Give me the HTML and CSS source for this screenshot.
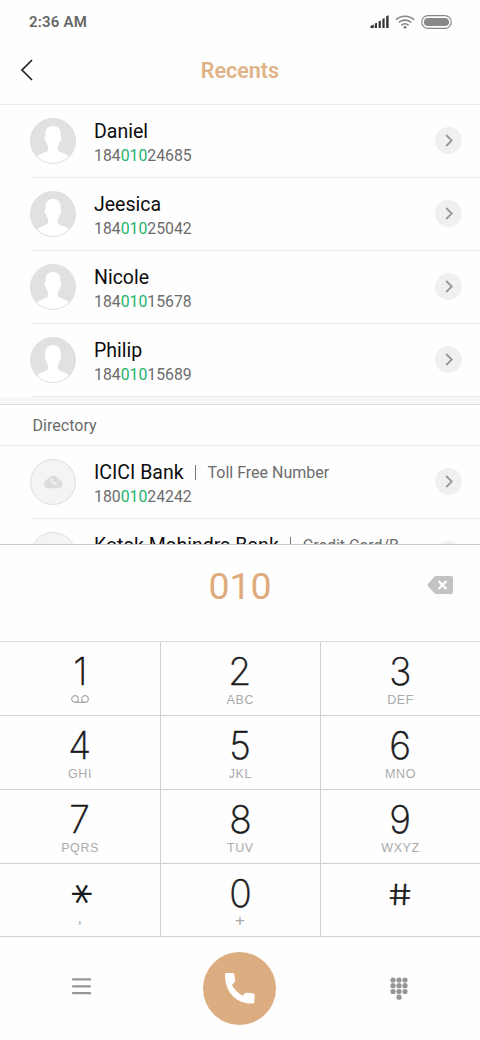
FILE: index.html
```html
<!DOCTYPE html>
<html lang="en">
<head>
<meta charset="utf-8">
<title>Recents</title>
<link rel="stylesheet" href="styles.css">
</head>
<body>
<svg width="0" height="0" class="defs">
  <defs>
    <symbol id="person" viewBox="0 0 46 46">
      <circle cx="23" cy="23" r="22.500" fill="#dfe1e3"/>
      <path d="M23 8c-5 0-7.600 3-7.600 7.500v3c-1.300.3-1 3.500.5 4.500.5 2.500 1.300 3.700 2.300 5v4.200c-2 2-8.200 3.300-11.500 6.300A22.300 22.300 0 0 0 23 45.300 22.300 22.300 0 0 0 39.300 38.500c-3.300-3-9.500-4.300-11.500-6.300V28c1-1.300 1.800-2.500 2.300-5 1.500-1 1.800-4.200.5-4.500v-3C30.600 11 28 8 23 8z" fill="#fff"/>
      <circle cx="23" cy="23" r="22.500" fill="none" stroke="#dcdee0"/>
    </symbol>
    <symbol id="cloud" viewBox="0 0 46 46">
      <circle cx="23" cy="23" r="22.500" fill="#f4f4f4" stroke="#dedede"/>
      <path d="M18.500 29.300a4.600 4.600 0 0 1-.7-9.100 6 6 0 0 1 10.800-.3 4.800 4.800 0 0 1-.1 9.400z" fill="#dcdcdc"/>
      <path d="M20.500 19.200l1.300-.2.700 1.800-.7.900 2.200 2 1-.6 1.700.9-.3 1.400c-3.500.6-6.500-2.500-5.900-6.200z" fill="#f4f4f4"/>
    </symbol>
    <symbol id="go" viewBox="0 0 27 27">
      <circle cx="13.500" cy="13.500" r="13.500" fill="#f0f0f0"/>
      <path d="M11.200 8l5.500 5.500-5.500 5.500" fill="none" stroke="#979797" stroke-width="1.800"/>
    </symbol>
  </defs>
</svg>
<div class="phone">
  <div class="status">
    <span class="time">2:36 AM</span>
    <svg class="signals" width="82" height="16" viewBox="0 0 82 16">
      <path d="M.5 14v-2l3.300-1.500V14zM4.800 14V9.600L7 8.700V14zM8.600 14V7.400l2.200-1V14zM12.400 14V5l2.200-1V14zM16.200 14V2.300l2.400-1V14z" fill="#333"/>
      <g fill="none" stroke="#858585" stroke-width="1.600">
        <path d="M26 5.600c5-4.500 13-4.500 18 0M28.700 8.500c3.500-3.200 9.100-3.200 12.600 0M31.400 11.300c2-1.900 5.200-1.900 7.200 0"/>
      </g>
      <circle cx="35" cy="13.300" r="1.400" fill="#777"/>
      <rect x="51.700" y="1.600" width="29.600" height="12.800" rx="6.400" fill="#fff" stroke="#858585" stroke-width="1.100"/>
      <rect x="54" y="4" width="25" height="8" rx="3.800" fill="#888"/>
    </svg>
  </div>
  <header class="header">
    <svg class="back" width="14" height="22" viewBox="0 0 14 22"><path d="M12 1L2 11l10 10" fill="none" stroke="#222" stroke-width="1.700"/></svg>
    <h1 class="title">Recents</h1>
  </header>
  <main class="list">
    <div class="row">
      <svg class="avatar"><use href="#person"/></svg>
      <div class="info"><div class="name">Daniel</div><div class="number">184<b>010</b>24685</div></div>
      <svg class="go"><use href="#go"/></svg>
    </div>
    <div class="row">
      <svg class="avatar"><use href="#person"/></svg>
      <div class="info"><div class="name">Jeesica</div><div class="number">184<b>010</b>25042</div></div>
      <svg class="go"><use href="#go"/></svg>
    </div>
    <div class="row">
      <svg class="avatar"><use href="#person"/></svg>
      <div class="info"><div class="name">Nicole</div><div class="number">184<b>010</b>15678</div></div>
      <svg class="go"><use href="#go"/></svg>
    </div>
    <div class="row">
      <svg class="avatar"><use href="#person"/></svg>
      <div class="info"><div class="name">Philip</div><div class="number">184<b>010</b>15689</div></div>
      <svg class="go"><use href="#go"/></svg>
    </div>
    <div class="gap"></div>
    <h2 class="section">Directory</h2>
    <div class="row">
      <svg class="avatar"><use href="#cloud"/></svg>
      <div class="info"><div class="name bank">ICICI Bank<i class="bar"></i><span class="kind">Toll Free Number</span></div><div class="number">180<b>010</b>24242</div></div>
      <svg class="go"><use href="#go"/></svg>
    </div>
    <div class="row partial">
      <svg class="avatar"><use href="#cloud"/></svg>
      <div class="info"><div class="name bank">Kotak Mahindra Bank<i class="bar"></i><span class="kind">Credit Card/B</span></div></div>
      <svg class="go"><use href="#go"/></svg>
    </div>
  </main>
  <section class="display">
    <span class="typed">010</span>
    <svg class="erase" width="26" height="18" viewBox="0 0 26 18">
      <path d="M9.200 0H24q2 0 2 2v14q0 2-2 2H9.200q-1.200 0-2-.9L1 10.300Q0 9 1 7.700L7.200.9Q8 0 9.200 0z" fill="#c2c2c2"/>
      <path d="M11.500 5l8 8m0-8l-8 8" stroke="#fff" stroke-width="2.200"/>
    </svg>
  </section>
  <section class="keypad">
    <div class="key"><span class="digit">1</span><svg class="voicemail" width="18" height="9" viewBox="0 0 18 9"><g fill="none" stroke="#aaa" stroke-width="1.200"><circle cx="4" cy="4" r="3.300"/><circle cx="14" cy="4" r="3.300"/><path d="M4 7.400h10"/></g></svg></div>
    <div class="key"><span class="digit">2</span><span class="letters">ABC</span></div>
    <div class="key"><span class="digit">3</span><span class="letters">DEF</span></div>
    <div class="key"><span class="digit">4</span><span class="letters">GHI</span></div>
    <div class="key"><span class="digit">5</span><span class="letters">JKL</span></div>
    <div class="key"><span class="digit">6</span><span class="letters">MNO</span></div>
    <div class="key"><span class="digit">7</span><span class="letters">PQRS</span></div>
    <div class="key"><span class="digit">8</span><span class="letters">TUV</span></div>
    <div class="key"><span class="digit">9</span><span class="letters">WXYZ</span></div>
    <div class="key"><span class="digit star">*</span><span class="letters comma">,</span></div>
    <div class="key"><span class="digit">0</span><span class="letters plus">+</span></div>
    <div class="key"><span class="digit hash">#</span></div>
  </section>
  <footer class="footer">
    <svg class="menu" width="19" height="17" viewBox="0 0 19 17"><path d="M1 1.400h17M1 8.300h17M1 15.100h17" stroke="#969696" stroke-width="2.200" stroke-linecap="round"/></svg>
    <div class="call">
      <svg width="32" height="33" viewBox="0 0 32 33"><path d="M2.500 1h6.300q1.200 0 1.400 1.200l1 6.300q.1.900-.5 1.500L7.900 13q4 7.300 10.800 10.700l2-2.300q.7-.7 1.700-.6l7 .7q1.300.1 1.200 1.400l-.3 7.300q-.1 1.300-1.400 1.300C12.500 32.300 1 20.500 1 2.500 1 1.300 1.500 1 2.500 1z" fill="#fff"/></svg>
    </div>
    <svg class="pad" width="18" height="23" viewBox="0 0 18 23"><g fill="#969696"><circle cx="3" cy="3" r="2.600"/><circle cx="9" cy="3" r="2.600"/><circle cx="15" cy="3" r="2.600"/><circle cx="3" cy="8.700" r="2.600"/><circle cx="9" cy="8.700" r="2.600"/><circle cx="15" cy="8.700" r="2.600"/><circle cx="3" cy="14.500" r="2.600"/><circle cx="9" cy="14.500" r="2.600"/><circle cx="15" cy="14.500" r="2.600"/><circle cx="9" cy="20.200" r="2.600"/></g></svg>
  </footer>
</div>
</body>
</html>
```
FILE: styles.css
```css
* { box-sizing: border-box; }
body { margin: 0; background: #fff; font-family: Roboto, sans-serif; }
.defs { display: block; }
.phone { width: 480px; height: 1040px; display: flex; flex-direction: column; overflow: hidden; background: #fefefe; }
svg { display: block; flex: none; }
.status { height: 44px; flex: none; display: flex; align-items: center; justify-content: space-between; padding: 0 28px 0 29px; }
.time { font-size: 15px; font-weight: 600; color: #666; letter-spacing: .2px; }
.header { height: 61px; flex: none; display: grid; grid-template-columns: 40px 1fr 40px; align-items: center; padding: 0 20px 8px; border-bottom: 1px solid #ececec; }
.title { margin: 0; padding-top: 2px; text-align: center; font-size: 21.500px; line-height: 26px; font-weight: 600; color: #e0b387; }
.list { height: 439px; flex: none; overflow: hidden; }
.row { height: 73px; margin-left: 31px; padding: 0 18px 0 0; display: flex; align-items: center; border-bottom: 1px solid #ececec; }
.avatar { width: 46px; height: 46px; margin-left: -1px; }
.info { flex: 1; margin-left: 18px; padding-top: 3px; white-space: nowrap; }
.name { font-size: 19.500px; line-height: 26px; color: #0c0c0c; }
.number { font-size: 15.800px; line-height: 21px; color: #6c6c6c; }
.number b { font-weight: 400; color: #1db36b; }
.bank { display: flex; align-items: center; }
.partial .info { padding-bottom: 22px; }
.bar { width: 1px; height: 15px; margin: 0 12px 2px 11px; background: #777; }
.kind { font-size: 16px; color: #6c6c6c; }
.go { width: 27px; height: 27px; margin-bottom: 1px; }
.gap { height: 8px; background: #f6f6f6; border-bottom: 1px solid #dedede; }
.section { margin: 0; height: 41px; padding: 0 32.500px; font-size: 16.100px; font-weight: 400; line-height: 42px; color: #6c6c6c; border-bottom: 1px solid #ececec; }
.display { height: 97px; flex: none; display: grid; grid-template-columns: 100px 1fr 100px; align-items: center; border-top: 1px solid #ccc; padding: 0 0 14px; }
.typed { grid-column: 2; text-align: center; font-size: 37.500px; line-height: 44px; color: #deab7c; }
.erase { margin-left: 47px; margin-bottom: 2px; }
.keypad { flex: none; display: grid; grid-template-columns: 160.500px 160px 1fr; grid-template-rows: 74px 74px 74px 73px; border-top: 1px solid #dedede; }
.key { display: flex; flex-direction: column; align-items: center; border-right: 1px solid #cfcfcf; border-bottom: 1px solid #cfcfcf; padding-top: 10px; }
.key:nth-child(3n) { border-right: 0; }
.digit { height: 40px; font: 200 38px/39px Inter, sans-serif; color: #1a1a1a; -webkit-text-stroke: .5px #1a1a1a; transform: scaleX(.98); }
.letters { font: 12.500px/16px "Liberation Sans", sans-serif; letter-spacing: .6px; color: #aaa; padding-left: .6px; }
.voicemail { margin: 3px 0 0 1px; }
.star { font-family: "DejaVu Sans"; font-weight: 400; transform: translate(-6px, 0) rotate(90deg) scale(1.1); -webkit-text-stroke: 0; }
.hash { transform: translateY(1px) skewX(8deg) scale(.93, .76); -webkit-text-stroke: .9px #1a1a1a; }
.plus { font-size: 17px; line-height: 14px; }
.comma { font-size: 16px; margin-top: -4px; }
.footer { flex: 1; display: grid; grid-template-columns: 162px 155px 1fr; justify-items: center; align-items: center; padding-bottom: 1px; }
.menu { margin-bottom: 3px; }
.call { width: 73px; height: 73px; border-radius: 50%; background: #dcad81; display: grid; place-items: center; }
```
